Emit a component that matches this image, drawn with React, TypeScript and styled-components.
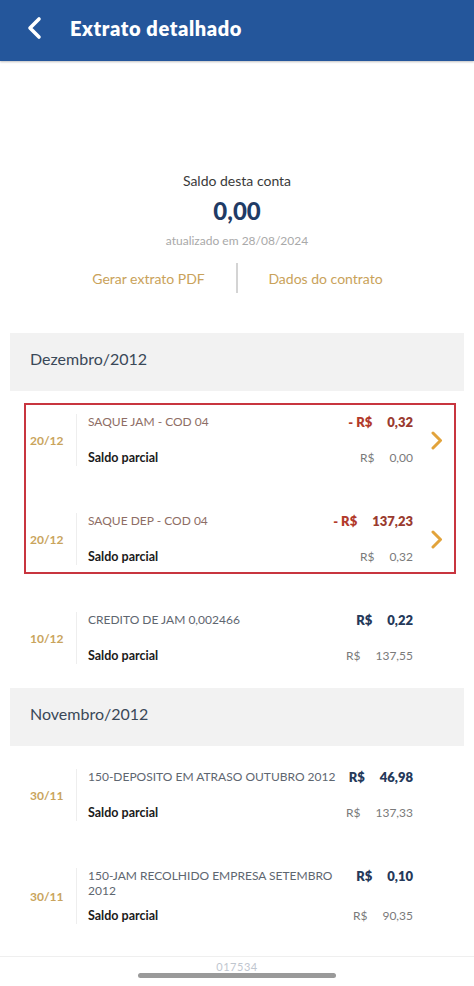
import React from 'react';
import styled, { createGlobalStyle } from 'styled-components';

const GlobalStyle = createGlobalStyle`
  html, body {
    margin: 0;
    padding: 0;
    background: #ffffff;
  }
  body {
    font-family: Lato, "Open Sans", sans-serif;
    color: #333;
  }
`;

interface Entry {
  date: string;
  description: string;
  amount: string;
  balance: string;
  debit?: boolean;
}

interface Month {
  title: string;
  entries: Entry[];
  highlighted?: number;
}

const months: Month[] = [
  {
    title: 'Dezembro/2012',
    highlighted: 2,
    entries: [
      { date: '20/12', description: 'SAQUE JAM - COD 04', amount: '0,32', balance: '0,00', debit: true },
      { date: '20/12', description: 'SAQUE DEP - COD 04', amount: '137,23', balance: '0,32', debit: true },
      { date: '10/12', description: 'CREDITO DE JAM 0,002466', amount: '0,22', balance: '137,55' },
    ],
  },
  {
    title: 'Novembro/2012',
    entries: [
      { date: '30/11', description: '150-DEPOSITO EM ATRASO OUTUBRO 2012', amount: '46,98', balance: '137,33' },
      { date: '30/11', description: '150-JAM RECOLHIDO EMPRESA SETEMBRO 2012', amount: '0,10', balance: '90,35' },
    ],
  },
];

const Page = styled.div`
  width: 474px;
  min-height: 986px;
  display: flex;
  flex-direction: column;
`;

const Header = styled.header`
  height: 61px;
  box-sizing: border-box;
  background: #24569b;
  box-shadow: 0 1px 2px rgba(0, 0, 0, 0.25);
  display: flex;
  align-items: center;
  padding: 0 0 6px 26px;
  gap: 26px;
`;

const BackButton = styled.button`
  border: none;
  background: none;
  padding: 0;
  display: flex;
  cursor: pointer;
`;

const Title = styled.h1`
  margin: 0;
  color: #fff;
  font-size: 20px;
  font-weight: 800;
  letter-spacing: 0.6px;
`;

const Summary = styled.section`
  padding-top: 112px;
  display: flex;
  flex-direction: column;
  align-items: center;
`;

const SummaryLabel = styled.div`
  font-size: 14px;
  line-height: 16px;
  color: #3a3a3a;
`;

const Balance = styled.div`
  margin-top: 8px;
  font-size: 24px;
  line-height: 28px;
  font-weight: 900;
  color: #1f3b66;
`;

const Updated = styled.div`
  margin-top: 9px;
  font-size: 12px;
  line-height: 14px;
  color: #a9a9a9;
`;

const Links = styled.div`
  margin-top: 15px;
  display: grid;
  grid-template-columns: 175px 2px 175px;
  height: 30px;
  align-items: center;
`;

const LinkButton = styled.button`
  border: none;
  background: none;
  font-family: inherit;
  font-size: 14px;
  color: #c9a25a;
  cursor: pointer;
  padding: 0;
`;

const Divider = styled.div`
  height: 30px;
  background: #d4d4d4;
`;

const MonthBar = styled.div<{ $first?: boolean }>`
  margin: ${(p) => (p.$first ? '40px' : '0')} 10px 0;
  height: 58px;
  box-sizing: border-box;
  background: #f2f2f2;
  display: flex;
  align-items: center;
  padding: 0 0 8px 20px;
  font-size: 16px;
  color: #3a4858;
`;

const Highlight = styled.div`
  position: relative;
  &::after {
    content: '';
    position: absolute;
    top: 12px;
    bottom: 15px;
    left: 24px;
    right: 18px;
    border: 2px solid #c8353f;
    pointer-events: none;
  }
`;

const Row = styled.div`
  display: grid;
  grid-template-columns: 46px 1fr 61px;
  align-items: center;
  padding: 23px 0 24px 30px;
`;

const DateLabel = styled.div`
  font-size: 12px;
  font-weight: 700;
  color: #c9a45c;
`;

const Content = styled.div`
  border-left: 1px solid #eeeeee;
  padding-left: 11px;
  display: flex;
  flex-direction: column;
  gap: 10px;
`;

const Line = styled.div`
  display: flex;
  justify-content: space-between;
  align-items: flex-start;
`;

const TopLine = styled(Line)`
  min-height: 26px;
`;

const Description = styled.div<{ $debit?: boolean }>`
  flex: 1;
  padding-right: 10px;
  font-size: 12px;
  line-height: 15px;
  color: ${(p) => (p.$debit ? '#8e6d65' : '#5e6670')};
`;

const Amount = styled.div<{ $debit?: boolean }>`
  display: flex;
  white-space: nowrap;
  font-size: 13px;
  line-height: 16px;
  font-weight: 800;
  color: ${(p) => (p.$debit ? '#9a3b2f' : '#25395a')};
`;

const Currency = styled.span<{ $debit?: boolean }>`
  color: ${(p) => (p.$debit ? '#b23a2b' : 'inherit')};
`;

const Value = styled.span`
  margin-left: 15px;
`;

const PartialLabel = styled.div`
  font-size: 12.5px;
  line-height: 16px;
  font-weight: 700;
  color: #1a1a1a;
`;

const PartialValue = styled.div`
  display: flex;
  font-size: 12px;
  line-height: 16px;
  color: #7a7a7a;
`;

const Chevron = styled.div`
  padding-left: 18px;
  display: flex;
`;

const Footer = styled.footer`
  margin-top: 8px;
  border-top: 1px solid #efefef;
  display: flex;
  flex-direction: column;
  align-items: center;
  padding-top: 3px;
`;

const FooterCode = styled.div`
  font-size: 11px;
  line-height: 13px;
  color: #bfc6cf;
  letter-spacing: 0.5px;
`;

const HomeIndicator = styled.div`
  width: 198px;
  height: 5px;
  border-radius: 3px;
  background: #9a9a9a;
`;

const EntryRow = ({ entry, arrow }: { entry: Entry; arrow?: boolean }) => (
  <Row>
    <DateLabel>{entry.date}</DateLabel>
    <Content>
      <TopLine>
        <Description $debit={entry.debit}>{entry.description}</Description>
        <Amount $debit={entry.debit}>
          <Currency $debit={entry.debit}>{entry.debit ? '- R$' : 'R$'}</Currency>
          <Value>{entry.amount}</Value>
        </Amount>
      </TopLine>
      <Line>
        <PartialLabel>Saldo parcial</PartialLabel>
        <PartialValue>
          <span>R$</span>
          <Value>{entry.balance}</Value>
        </PartialValue>
      </Line>
    </Content>
    {arrow ? (
      <Chevron>
        <svg width="12" height="19" viewBox="0 0 12 19" fill="none">
          <polyline points="2,2 9.5,9.5 2,17" stroke="#e2a33b" strokeWidth="3" strokeLinecap="round" strokeLinejoin="round" />
        </svg>
      </Chevron>
    ) : (
      <div />
    )}
  </Row>
);

export default function App() {
  return (
    <Page>
      <GlobalStyle />
      <Header>
        <BackButton aria-label="Voltar">
          <svg width="18" height="24" viewBox="0 0 18 24" fill="none">
            <polyline points="13,3 4,12 13,21" stroke="#ffffff" strokeWidth="3.6" strokeLinecap="round" strokeLinejoin="round" />
          </svg>
        </BackButton>
        <Title>Extrato detalhado</Title>
      </Header>

      <Summary>
        <SummaryLabel>Saldo desta conta</SummaryLabel>
        <Balance>0,00</Balance>
        <Updated>atualizado em 28/08/2024</Updated>
        <Links>
          <LinkButton>Gerar extrato PDF</LinkButton>
          <Divider />
          <LinkButton>Dados do contrato</LinkButton>
        </Links>
      </Summary>

      {months.map((month, mi) => {
        const count = month.highlighted ?? 0;
        const marked = month.entries.slice(0, count);
        const rest = month.entries.slice(count);
        return (
          <React.Fragment key={month.title}>
            <MonthBar $first={mi === 0}>{month.title}</MonthBar>
            {marked.length > 0 && (
              <Highlight>
                {marked.map((e, i) => (
                  <EntryRow key={i} entry={e} arrow />
                ))}
              </Highlight>
            )}
            {rest.map((e, i) => (
              <EntryRow key={i} entry={e} />
            ))}
          </React.Fragment>
        );
      })}

      <Footer>
        <FooterCode>017534</FooterCode>
        <HomeIndicator />
      </Footer>
    </Page>
  );
}
